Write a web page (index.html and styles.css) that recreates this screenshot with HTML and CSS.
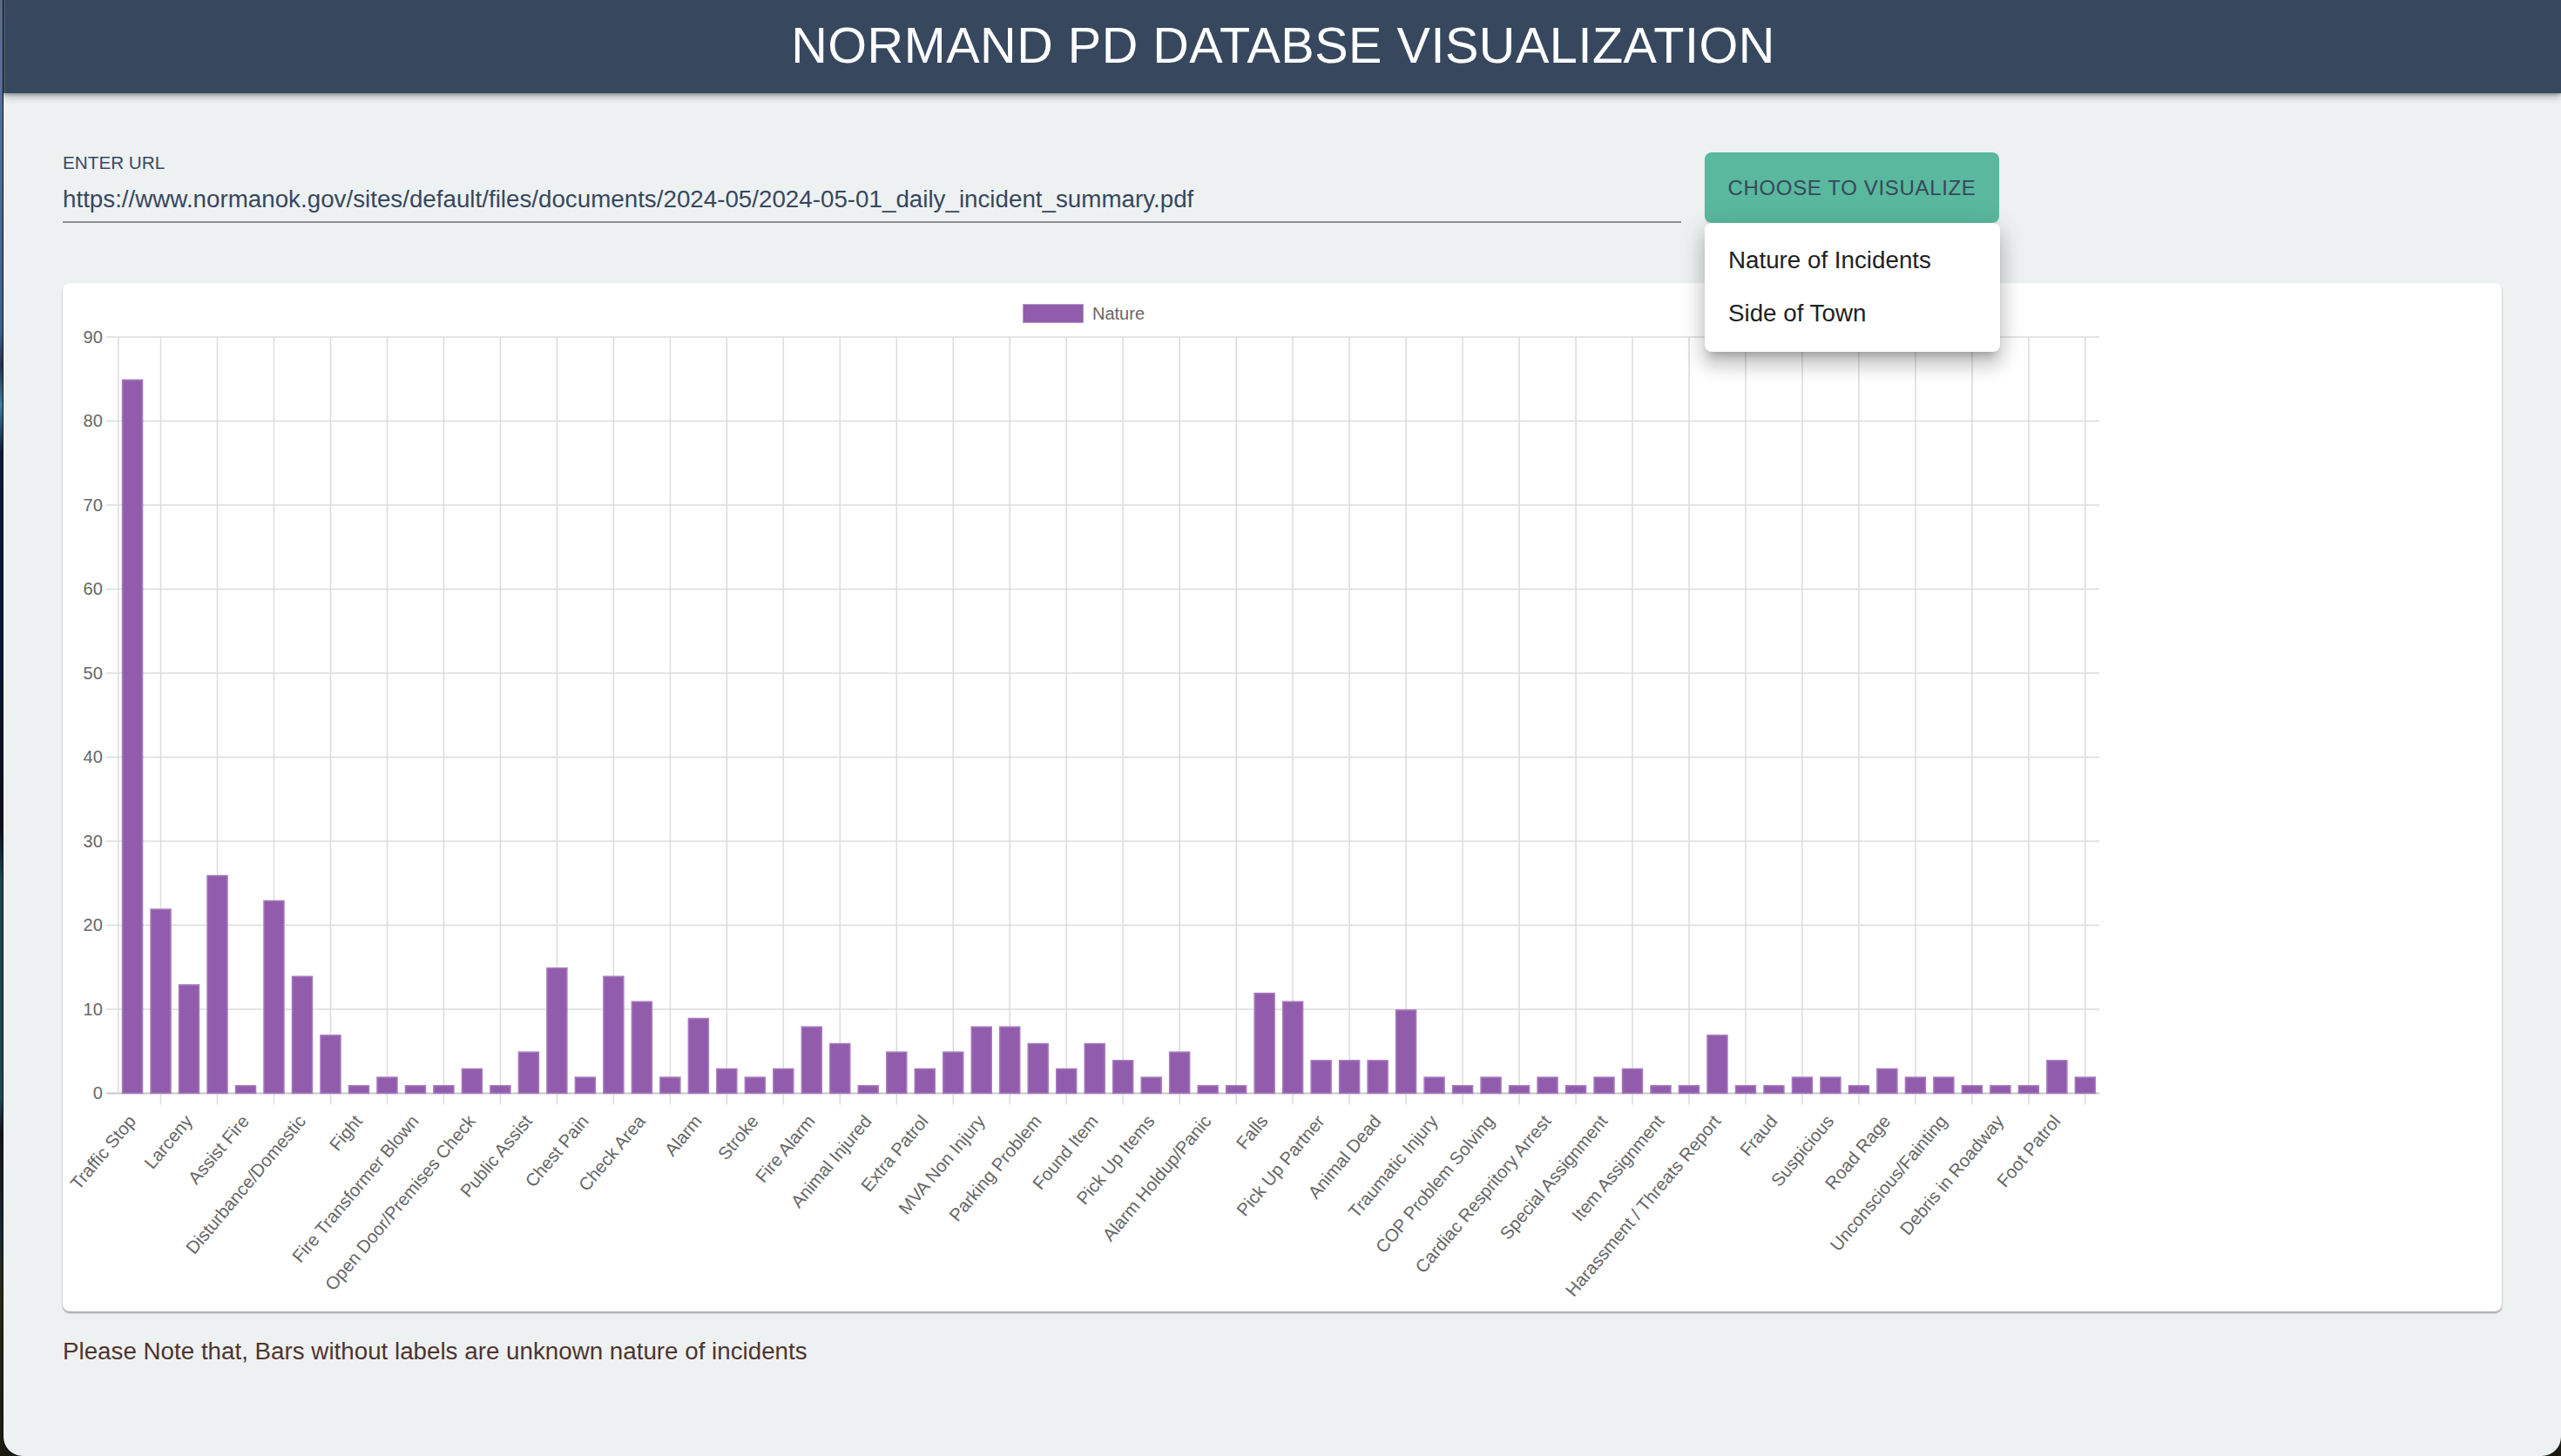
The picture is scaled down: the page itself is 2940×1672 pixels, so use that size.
FILE: index.html
```html
<!DOCTYPE html>
<html lang="en">
<head>
<meta charset="utf-8">
<title>Normand PD Databse Visualization</title>
<link rel="stylesheet" href="styles.css">
</head>
<body>
<div class="window">
  <header class="app-header">
    <h1 class="app-title">NORMAND PD DATABSE VISUALIZATION</h1>
  </header>
  <main class="content">
    <section class="controls">
      <div class="url-field">
        <label class="url-label" for="url">ENTER URL</label>
        <input class="url-input" id="url" type="text" value="https://www.normanok.gov/sites/default/files/documents/2024-05/2024-05-01_daily_incident_summary.pdf">
      </div>
      <div class="menu-anchor">
        <button class="choose-button" type="button">CHOOSE TO VISUALIZE</button>
        <ul class="menu">
          <li class="menu-item">Nature of Incidents</li>
          <li class="menu-item">Side of Town</li>
        </ul>
      </div>
    </section>
    <section class="chart-card">
      <svg class="chart" id="chart" viewBox="72 325 2800 1181" xmlns="http://www.w3.org/2000/svg"></svg>
    </section>
    <p class="note">Please Note that, Bars without labels are unknown nature of incidents</p>
  </main>
</div>
<script src="chart.js"></script>
</body>
</html>
```
FILE: styles.css
```css
* { box-sizing: border-box; }
html, body { margin: 0; height: 100%; }
body {
  height: 1672px;
  overflow: hidden;
  font-family: "Liberation Sans", Arial, sans-serif;
  background: linear-gradient(180deg, #5c6a86 0, #56709c 120px, #3f5f92 380px, #25304f 420px, #3f7d9e 465px, #0c1a3c 520px, #0a1430 800px, #0b0f1c 950px, #1d4554 1010px, #1f4857 1260px, #14141c 1300px, #1b2a30 1420px, #2a2a18 1480px, #1a1a10 1672px);
}
.window {
  margin-left: 4px;
  height: 1672px;
  background: #eef1f2;
  border-radius: 0 0 22px 22px;
  box-shadow: -1px 0 0 #0b0b0b;
  overflow: hidden;
  display: flex;
  flex-direction: column;
}
.app-header {
  height: 107px;
  flex: none;
  padding-bottom: 2px;
  background: #37475e;
  border-left: 2px solid #465569;
  display: flex;
  align-items: center;
  justify-content: center;
  box-shadow: 0 4px 8px rgba(0,0,0,.28), 0 2px 3px rgba(0,0,0,.2);
  position: relative;
}
.app-title {
  margin: 0;
  color: #fff;
  font-size: 57.6px;
  font-weight: 400;
  line-height: 1;
  letter-spacing: .5px;
}
.content { padding: 68px 68px 0; display: flex; flex-direction: column; }
.controls { display: flex; gap: 27px; height: 82px; align-items: flex-start; }
.url-field { flex: none; width: 1858px; height: 81px; display: flex; flex-direction: column; border-bottom: 2px solid #8d9092; }
.url-label { font-size: 20.7px; line-height: 24px; color: #37475e; }
.url-input {
  border: 0;
  outline: 0;
  background: transparent;
  padding: 0;
  margin-top: 12px;
  height: 36px;
  font: 27.75px/36px "Liberation Sans", Arial, sans-serif;
  color: #37475e;
  width: 100%;
}
.menu-anchor { position: relative; flex: none; width: 338px; }
.choose-button {
  display: block;
  width: 338px;
  height: 81px;
  border: 0;
  border-radius: 8px;
  background: #59b89d;
  color: #37475e;
  font: 24px/1 "Liberation Sans", Arial, sans-serif;
  letter-spacing: .65px;
  padding: 0;
  box-shadow: 0 2px 2px rgba(0,0,0,.08);
}
.menu {
  position: absolute;
  z-index: 5;
  top: 81px;
  left: 0;
  width: 339px;
  margin: 0;
  padding: 13px 0;
  list-style: none;
  background: #fff;
  border-radius: 8px;
  box-shadow: 0 10px 10px -6px rgba(0,0,0,.2), 0 16px 20px 2px rgba(0,0,0,.14), 0 6px 28px 4px rgba(0,0,0,.12);
}
.menu-item { height: 61px; line-height: 60px; padding-left: 27px; font-size: 27.75px; color: #212121; }
.chart-card {
  margin-top: 68px;
  height: 1181px;
  background: #fff;
  border-radius: 8px;
  box-shadow: 0 2px 2px rgba(0,0,0,.32), 0 0 3px rgba(0,0,0,.05);
}
.chart { display: block; width: 100%; height: 100%; }
.grid { stroke: #dcdcdc; stroke-width: 1.5; }
.axis { stroke: #c8c8c8; stroke-width: 2; }
.bar { fill: #925cad; stroke: #a67cbd; stroke-width: 1.5; }
.legend-box { fill: #925cad; stroke: #b795c9; stroke-width: 1; }
.tick-label { font: 20.5px "Liberation Sans", Arial, sans-serif; fill: #666; }
.legend-label { font: 20px "Liberation Sans", Arial, sans-serif; fill: #666; }
.y-label { font: 20px "Liberation Sans", Arial, sans-serif; fill: #666; }
.note { margin: 30px 0 0; font-size: 27.75px; line-height: 32px; color: #4e342e; }
```
FILE: chart.js
```js
(function () {
  var NS = 'http://www.w3.org/2000/svg';
  var svg = document.getElementById('chart');
  var values = [85,22,13,26,1,23,14,7,1,2,1,1,3,1,5,15,2,14,11,2,9,3,2,3,8,6,1,5,3,5,8,8,6,3,6,4,2,5,1,1,12,11,4,4,4,10,2,1,2,1,2,1,2,3,1,1,7,1,1,2,2,1,3,2,2,1,1,1,4,2];
  var labels = ['Traffic Stop','Larceny','Assist Fire','Disturbance/Domestic','Fight','Fire Transformer Blown','Open Door/Premises Check','Public Assist','Chest Pain','Check Area','Alarm','Stroke','Fire Alarm','Animal Injured','Extra Patrol','MVA Non Injury','Parking Problem','Found Item','Pick Up Items','Alarm Holdup/Panic','Falls','Pick Up Partner','Animal Dead','Traumatic Injury','COP Problem Solving','Cardiac Respritory Arrest','Special Assignment','Item Assignment','Harassment / Threats Report','Fraud','Suspicious','Road Rage','Unconscious/Fainting','Debris in Roadway','Foot Patrol'];
  var left = 135.8, pitch = 32.49, right = 2410, top = 387, base = 1255.4, unit = (base - top) / 90, barW = 23;

  function el(name, attrs, text) {
    var n = document.createElementNS(NS, name);
    for (var k in attrs) n.setAttribute(k, attrs[k]);
    if (text !== undefined) n.textContent = text;
    svg.appendChild(n);
    return n;
  }

  // legend
  el('rect', { 'class': 'legend-box', x: 1174.5, y: 349.5, width: 69, height: 21 });
  el('text', { 'class': 'legend-label', x: 1254, y: 367 }, 'Nature');

  // horizontal grid + y labels
  for (var v = 0; v <= 90; v += 10) {
    var y = base - v * unit;
    el('line', { 'class': v === 0 ? 'axis' : 'grid', x1: left - 14, x2: right, y1: y, y2: y });
    el('text', { 'class': 'y-label', x: left - 18, y: y + 7, 'text-anchor': 'end' }, String(v));
  }

  // vertical grid
  el('line', { 'class': 'grid', x1: left, x2: left, y1: top, y2: base });
  for (var i = 1; i < values.length; i += 2) {
    var gx = left + pitch * (i + 0.5);
    el('line', { 'class': 'grid', x1: gx, x2: gx, y1: top, y2: base + 13 });
  }

  // bars
  values.forEach(function (val, idx) {
    var cx = left + pitch * (idx + 0.5);
    var h = val * unit - 1;
    el('rect', { 'class': 'bar', x: cx - barW / 2, y: base - h, width: barW, height: h });
  });

  // rotated x labels (every other category)
  labels.forEach(function (text, idx) {
    var cx = left + pitch * (idx * 2 + 0.5);
    var tx = cx + 5, ty = 1288;
    el('text', { 'class': 'tick-label', 'text-anchor': 'end', transform: 'translate(' + tx + ' ' + ty + ') rotate(-50)' }, text);
  });
})();
```
